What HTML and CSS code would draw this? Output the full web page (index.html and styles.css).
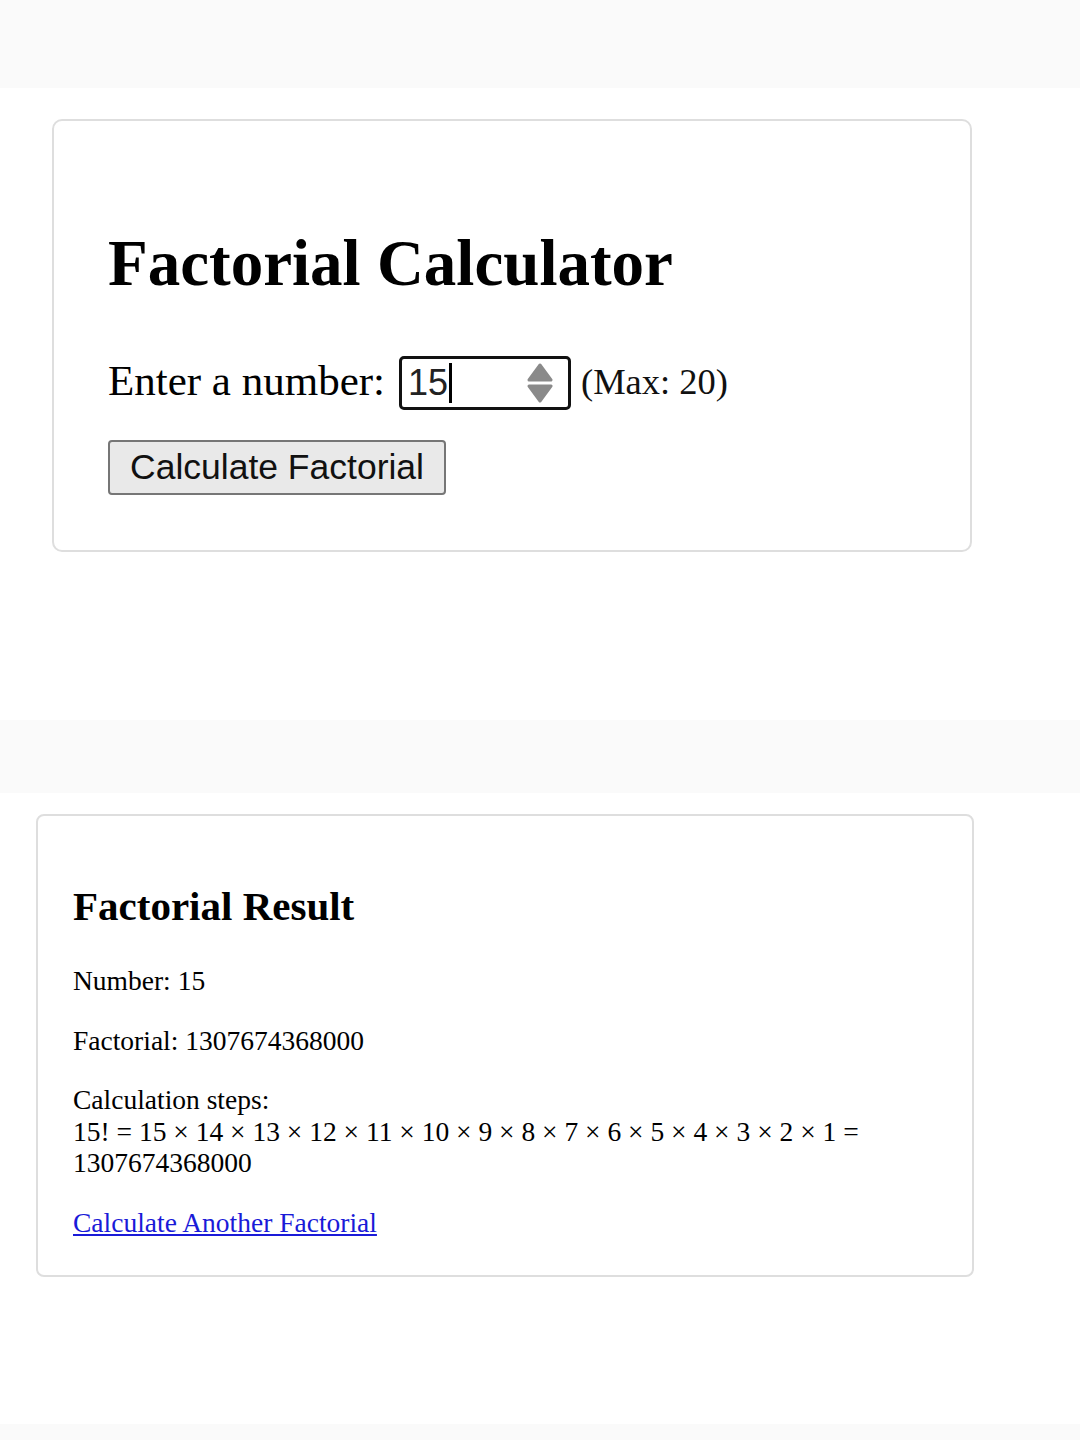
FILE: index.html
```html
<!DOCTYPE html>
<html lang="en">
<head>
<meta charset="utf-8">
<title>Factorial Calculator</title>
<link rel="stylesheet" href="styles.css">
</head>
<body>
<div class="band band-top"></div>
<section class="screen screen-one">
  <div class="card card-form">
    <h1 class="title">Factorial Calculator</h1>
    <div class="input-row">
      <label class="label">Enter a number:</label>
      <div class="num-input">
        <span class="num-value">15</span><span class="caret"></span>
        <span class="num-fill"></span>
        <svg class="spinner" width="26" height="44" viewBox="0 0 26 44">
          <path d="M13 4 L24 19 L2 19 Z" fill="#8a8a8a" stroke="#8a8a8a" stroke-width="3" stroke-linejoin="round"/>
          <path d="M13 40 L24 25 L2 25 Z" fill="#8a8a8a" stroke="#8a8a8a" stroke-width="3" stroke-linejoin="round"/>
        </svg>
      </div>
      <span class="max-note">(Max: 20)</span>
    </div>
    <button class="calc-btn" type="button">Calculate Factorial</button>
  </div>
</section>
<div class="band band-mid"></div>
<section class="screen screen-two">
  <div class="card card-result">
    <h2 class="result-title">Factorial Result</h2>
    <p class="line">Number: 15</p>
    <p class="line">Factorial: 1307674368000</p>
    <p class="line">Calculation steps:<br>15! = 15 × 14 × 13 × 12 × 11 × 10 × 9 × 8 × 7 × 6 × 5 × 4 × 3 × 2 × 1 = 1307674368000</p>
    <p class="line"><a class="again" href="#">Calculate Another Factorial</a></p>
  </div>
</section>
<div class="band band-bottom"></div>
</body>
</html>
```

FILE: styles.css
```css
html, body {
  margin: 0;
  padding: 0;
  background: #ffffff;
  color: #000;
  font-family: "Liberation Serif", "Times New Roman", serif;
}

.band {
  background: #fafafa;
}
.band-top { height: 88px; }
.band-mid { height: 73px; }
.band-bottom { height: 16px; }

.screen {
  background: #fff;
}
.screen-one {
  height: 632px;
  padding-top: 31px;
  box-sizing: border-box;
}
.screen-two {
  height: 631px;
  padding-top: 21px;
  box-sizing: border-box;
}

.card {
  background: #fff;
  border: 2px solid #dedede;
  border-radius: 10px;
  box-sizing: border-box;
}

.card-form {
  margin-left: 52px;
  width: 920px;
  padding: 106px 54px 55px;
}

.title {
  margin: 0 0 57px;
  font-size: 65px;
  line-height: 72px;
  font-weight: bold;
}

.input-row {
  display: flex;
  align-items: center;
  height: 54px;
}

.label {
  font-size: 43px;
  line-height: 54px;
  padding-bottom: 4px;
  margin-right: 14px;
}

.num-input {
  display: flex;
  align-items: center;
  width: 172px;
  height: 54px;
  box-sizing: border-box;
  border: 3px solid #111;
  border-radius: 5px;
  padding: 0 15px 0 6px;
  font-family: "Liberation Sans", Arial, sans-serif;
  font-size: 36px;
}
.num-value {
  color: #222;
  line-height: 1;
}
.caret {
  width: 3px;
  height: 40px;
  background: #000;
  margin-left: 1px;
}
.num-fill { flex: 1; }
.spinner { display: block; }

.max-note {
  font-size: 36.5px;
  line-height: 54px;
  padding-bottom: 2px;
  margin-left: 10px;
  color: #111;
}

.calc-btn {
  display: block;
  margin-top: 30px;
  width: 338px;
  height: 55px;
  padding: 0;
  background: #e9e9e9;
  border: 2px solid #767676;
  border-radius: 4px;
  font-family: "Liberation Sans", Arial, sans-serif;
  font-size: 35.5px;
  color: #111;
}

.card-result {
  margin-left: 36px;
  width: 938px;
  padding: 67px 35px 37px;
  border-radius: 8px;
}

.result-title {
  margin: 0 0 35px;
  font-size: 41px;
  line-height: 47px;
  font-weight: bold;
}

.line {
  margin: 0 0 28px;
  font-size: 27.5px;
  line-height: 31.5px;
}
.line:last-child { margin-bottom: 0; }

.again {
  color: #1a1ad8;
  text-decoration: underline;
}
```
